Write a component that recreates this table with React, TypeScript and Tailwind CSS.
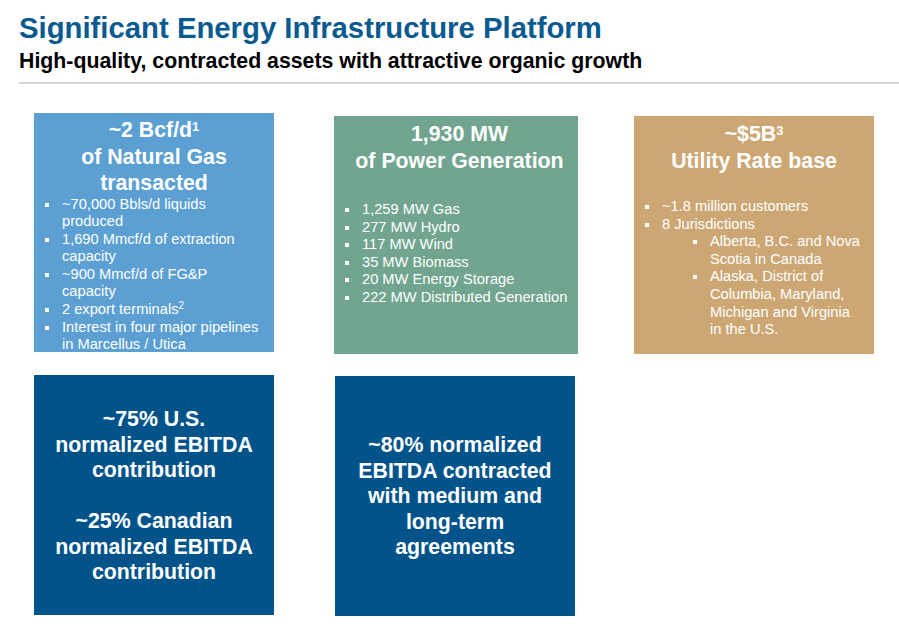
import React from 'react';

const font = { fontFamily: '"Liberation Sans", Arial, sans-serif' };

function Bullet({ children, sub }: { children: React.ReactNode; sub?: boolean }) {
  return (
    <li className={`flex ${sub ? 'pl-[48px]' : ''}`}>
      <span className="shrink-0 w-[17px] pt-[7px]">
        <span className="block w-[4px] h-[4px] bg-white" />
      </span>
      <span>{children}</span>
    </li>
  );
}

export default function App() {
  return (
    <div className="w-[899px] h-[629px] bg-white overflow-hidden" style={font}>
      <div className="pl-[19px] pt-[11px]">
        <h1 className="text-[29.3px] leading-[34px] font-bold text-[#0b5a8f]">
          Significant Energy Infrastructure Platform
        </h1>
        <h2 className="text-[21.3px] leading-[24px] font-bold text-black mt-[4px]">
          High-quality, contracted assets with attractive organic growth
        </h2>
        <div className="h-[2px] bg-[#d3d3d3] mt-[9px]" />
      </div>

      <div className="flex items-start pl-[34px] mt-[29px]">
        <div className="w-[240px] h-[239px] bg-[#5b9fd3] text-white pl-[11px] pr-[14px] pt-[4px]">
          <div className="text-center font-bold text-[21.3px] leading-[26.5px] pl-[3px]">
            <div>
              ~2 Bcf/d<sup className="text-[13px]">1</sup>
            </div>
            <div>of Natural Gas</div>
            <div>transacted</div>
          </div>
          <ul className="text-[14.67px] leading-[17.6px] -mt-[1px]">
            <Bullet>~70,000 Bbls/d liquids produced</Bullet>
            <Bullet>1,690 Mmcf/d of extraction capacity</Bullet>
            <Bullet>~900 Mmcf/d of FG&amp;P capacity</Bullet>
            <Bullet>
              2 export terminals<sup className="text-[10px]">2</sup>
            </Bullet>
            <Bullet>Interest in four major pipelines in Marcellus / Utica</Bullet>
          </ul>
        </div>

        <div className="w-[244px] h-[238px] bg-[#71a58f] text-white pl-[11px] pr-[4px] pt-[5px] mt-[3px] ml-[60px]">
          <div className="text-center font-bold text-[21.3px] leading-[26.5px]">
            <div>1,930 MW</div>
            <div>of Power Generation</div>
          </div>
          <ul className="text-[14.67px] leading-[17.6px] mt-[27px]">
            <Bullet>1,259 MW Gas</Bullet>
            <Bullet>277 MW Hydro</Bullet>
            <Bullet>117 MW Wind</Bullet>
            <Bullet>35 MW Biomass</Bullet>
            <Bullet>20 MW Energy Storage</Bullet>
            <Bullet>222 MW Distributed Generation</Bullet>
          </ul>
        </div>

        <div className="w-[240px] h-[238px] bg-[#cca774] text-white pl-[11px] pr-[14px] pt-[5px] mt-[3px] ml-[56px]">
          <div className="text-center font-bold text-[21.3px] leading-[26.5px] pl-[3px]">
            <div>
              ~$5B<sup className="text-[13px]">3</sup>
            </div>
            <div>Utility Rate base</div>
          </div>
          <ul className="text-[14.67px] leading-[17.6px] mt-[24px]">
            <Bullet>~1.8 million customers</Bullet>
            <Bullet>8 Jurisdictions</Bullet>
            <Bullet sub>Alberta, B.C. and Nova Scotia in Canada</Bullet>
            <Bullet sub>Alaska, District of Columbia, Maryland, Michigan and Virginia in the U.S.</Bullet>
          </ul>
        </div>
      </div>

      <div className="flex items-start pl-[34px] mt-[21px]">
        <div className="w-[240px] h-[240px] bg-[#02538a] text-white flex flex-col items-center justify-center text-center font-bold text-[21.3px] leading-[25.5px] pt-[3px]">
          <div>~75% U.S.</div>
          <div>normalized EBITDA</div>
          <div>contribution</div>
          <div className="h-[25.5px]" />
          <div>~25% Canadian</div>
          <div>normalized EBITDA</div>
          <div>contribution</div>
        </div>
        <div className="w-[240px] h-[240px] bg-[#02538a] text-white flex flex-col items-center justify-center text-center font-bold text-[21.3px] leading-[25.5px] pt-[2px] mt-[1px] ml-[61px]">
          <div>~80% normalized</div>
          <div>EBITDA contracted</div>
          <div>with medium and</div>
          <div>long-term</div>
          <div>agreements</div>
        </div>
      </div>
    </div>
  );
}
